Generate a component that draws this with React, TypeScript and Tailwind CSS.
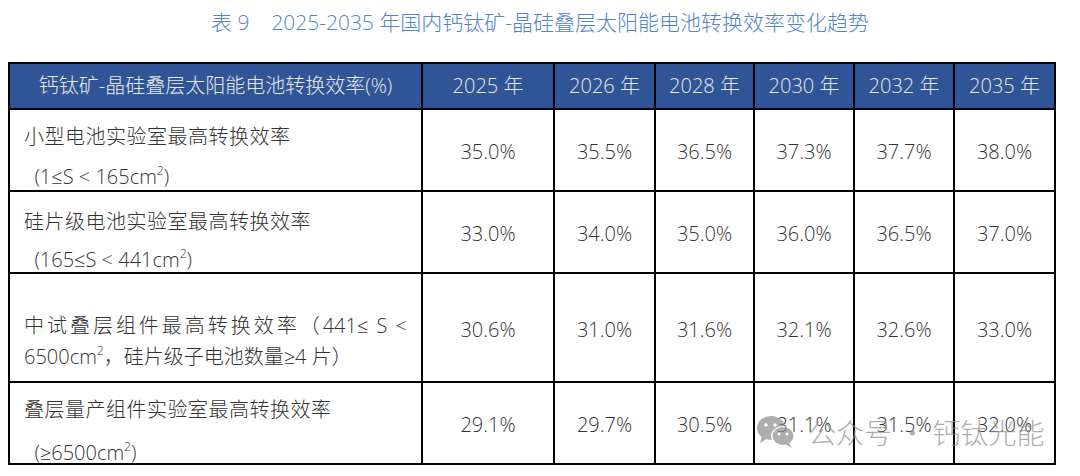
const years = ['2025 年', '2026 年', '2028 年', '2030 年', '2032 年', '2035 年'];

const rows = [
    { h: 'h-[82px]', pt: 'pt-[7px]', values: ['35.0%', '35.5%', '36.5%', '37.3%', '37.7%', '38.0%'] },
    { h: 'h-[82px]', pt: 'pt-[11px]', values: ['33.0%', '34.0%', '35.0%', '36.0%', '36.5%', '37.0%'] },
    { h: 'h-[109px]', pt: 'pt-[36px]', values: ['30.6%', '31.0%', '31.6%', '32.1%', '32.6%', '33.0%'] },
    { h: 'h-[82px]', pt: 'pt-[5px]', values: ['29.1%', '29.7%', '30.5%', '31.1%', '31.5%', '32.0%'] },
];

const Sq = () => <sup className="text-[12px] relative -top-[9px]">2</sup>;

const labels = [
    <div className="h-[60px] leading-[40px]">
        <div className="tracking-[0.5px]">小型电池实验室最高转换效率</div>
        <div>&nbsp;&nbsp;(1≤S &lt; 165cm<Sq />)</div>
    </div>,
    <div className="h-[60px] leading-[38px]">
        <div className="tracking-[0.5px]">硅片级电池实验室最高转换效率</div>
        <div>&nbsp;&nbsp;(165≤S &lt; 441cm<Sq />)</div>
    </div>,
    <div className="h-[60px] leading-[31px] pr-[14px]">
        <div className="text-justify [text-align-last:justify]">中试叠层组件最高转换效率（441≤ S &lt;</div>
        <div>6500cm<Sq />，硅片级子电池数量≥4 片）</div>
    </div>,
    <div className="h-[60px] leading-[43px]">
        <div className="tracking-[0.5px]">叠层量产组件实验室最高转换效率</div>
        <div>&nbsp;&nbsp;(≥6500cm<Sq />)</div>
    </div>,
];

const WeChat = () => (
    <svg width="42" height="34" viewBox="0 0 42 34" fill="currentColor">
        <ellipse cx="15" cy="13" rx="14" ry="12" />
        <path d="M6 21 L4 28 L12 23 Z" />
        <ellipse cx="27" cy="21" rx="12" ry="10" fill="white" />
        <ellipse cx="27" cy="21" rx="10.5" ry="9" />
        <path d="M33 28 L36 33 L29 29 Z" />
        <circle cx="10" cy="10" r="1.8" fill="white" />
        <circle cx="19" cy="10" r="1.8" fill="white" />
        <circle cx="23" cy="19" r="1.5" fill="white" />
        <circle cx="31" cy="19" r="1.5" fill="white" />
    </svg>
);

export default function App() {
    return (
        <div
            className="relative w-[1080px] h-[476px] bg-white overflow-hidden font-light"
            style={{ fontFamily: '"Open Sans", "Noto Sans CJK SC", sans-serif' }}
        >
            <div className="pt-[8px] h-[62px] text-center text-[21px] leading-[28px] text-[#5483c8]">
                表 9&nbsp;&nbsp;&nbsp;&nbsp;2025-2035 年国内钙钛矿-晶硅叠层太阳能电池转换效率变化趋势
            </div>

            <table className="ml-[8px] w-[1046px] table-fixed border-collapse border-2 border-black text-[20px] text-[#333]">
                <colgroup>
                    <col className="w-[413px]" />
                    <col className="w-[132px]" />
                    <col className="w-[101px]" />
                    <col className="w-[99px]" />
                    <col className="w-[100px]" />
                    <col className="w-[100px]" />
                    <col className="w-[101px]" />
                </colgroup>
                <thead>
                    <tr className="h-[46px] bg-[#2f5597] text-[#e8e8e8]">
                        <th className="border-2 border-black font-light text-center">钙钛矿-晶硅叠层太阳能电池转换效率(%)</th>
                        {years.map((y) => (
                            <th key={y} className="border-2 border-black font-light text-center">{y}</th>
                        ))}
                    </tr>
                </thead>
                <tbody>
                    {rows.map((r, i) => (
                        <tr key={i} className={r.h}>
                            <td className={`border-2 border-black align-top pl-[14px] ${r.pt}`}>{labels[i]}</td>
                            {r.values.map((v, j) => (
                                <td key={j} className="border-2 border-black text-center pt-[4px]">{v}</td>
                            ))}
                        </tr>
                    ))}
                </tbody>
            </table>

            {/* watermark */}
            <div className="absolute left-[756px] top-[415px] flex items-center gap-[10px] text-[#8c8c8c] opacity-70 pointer-events-none">
                <WeChat />
                <span className="text-[28px] leading-[34px]" style={{ fontFamily: '"Noto Sans CJK SC", sans-serif' }}>
                    公众号 · 钙钛光能
                </span>
            </div>
        </div>
    );
}
